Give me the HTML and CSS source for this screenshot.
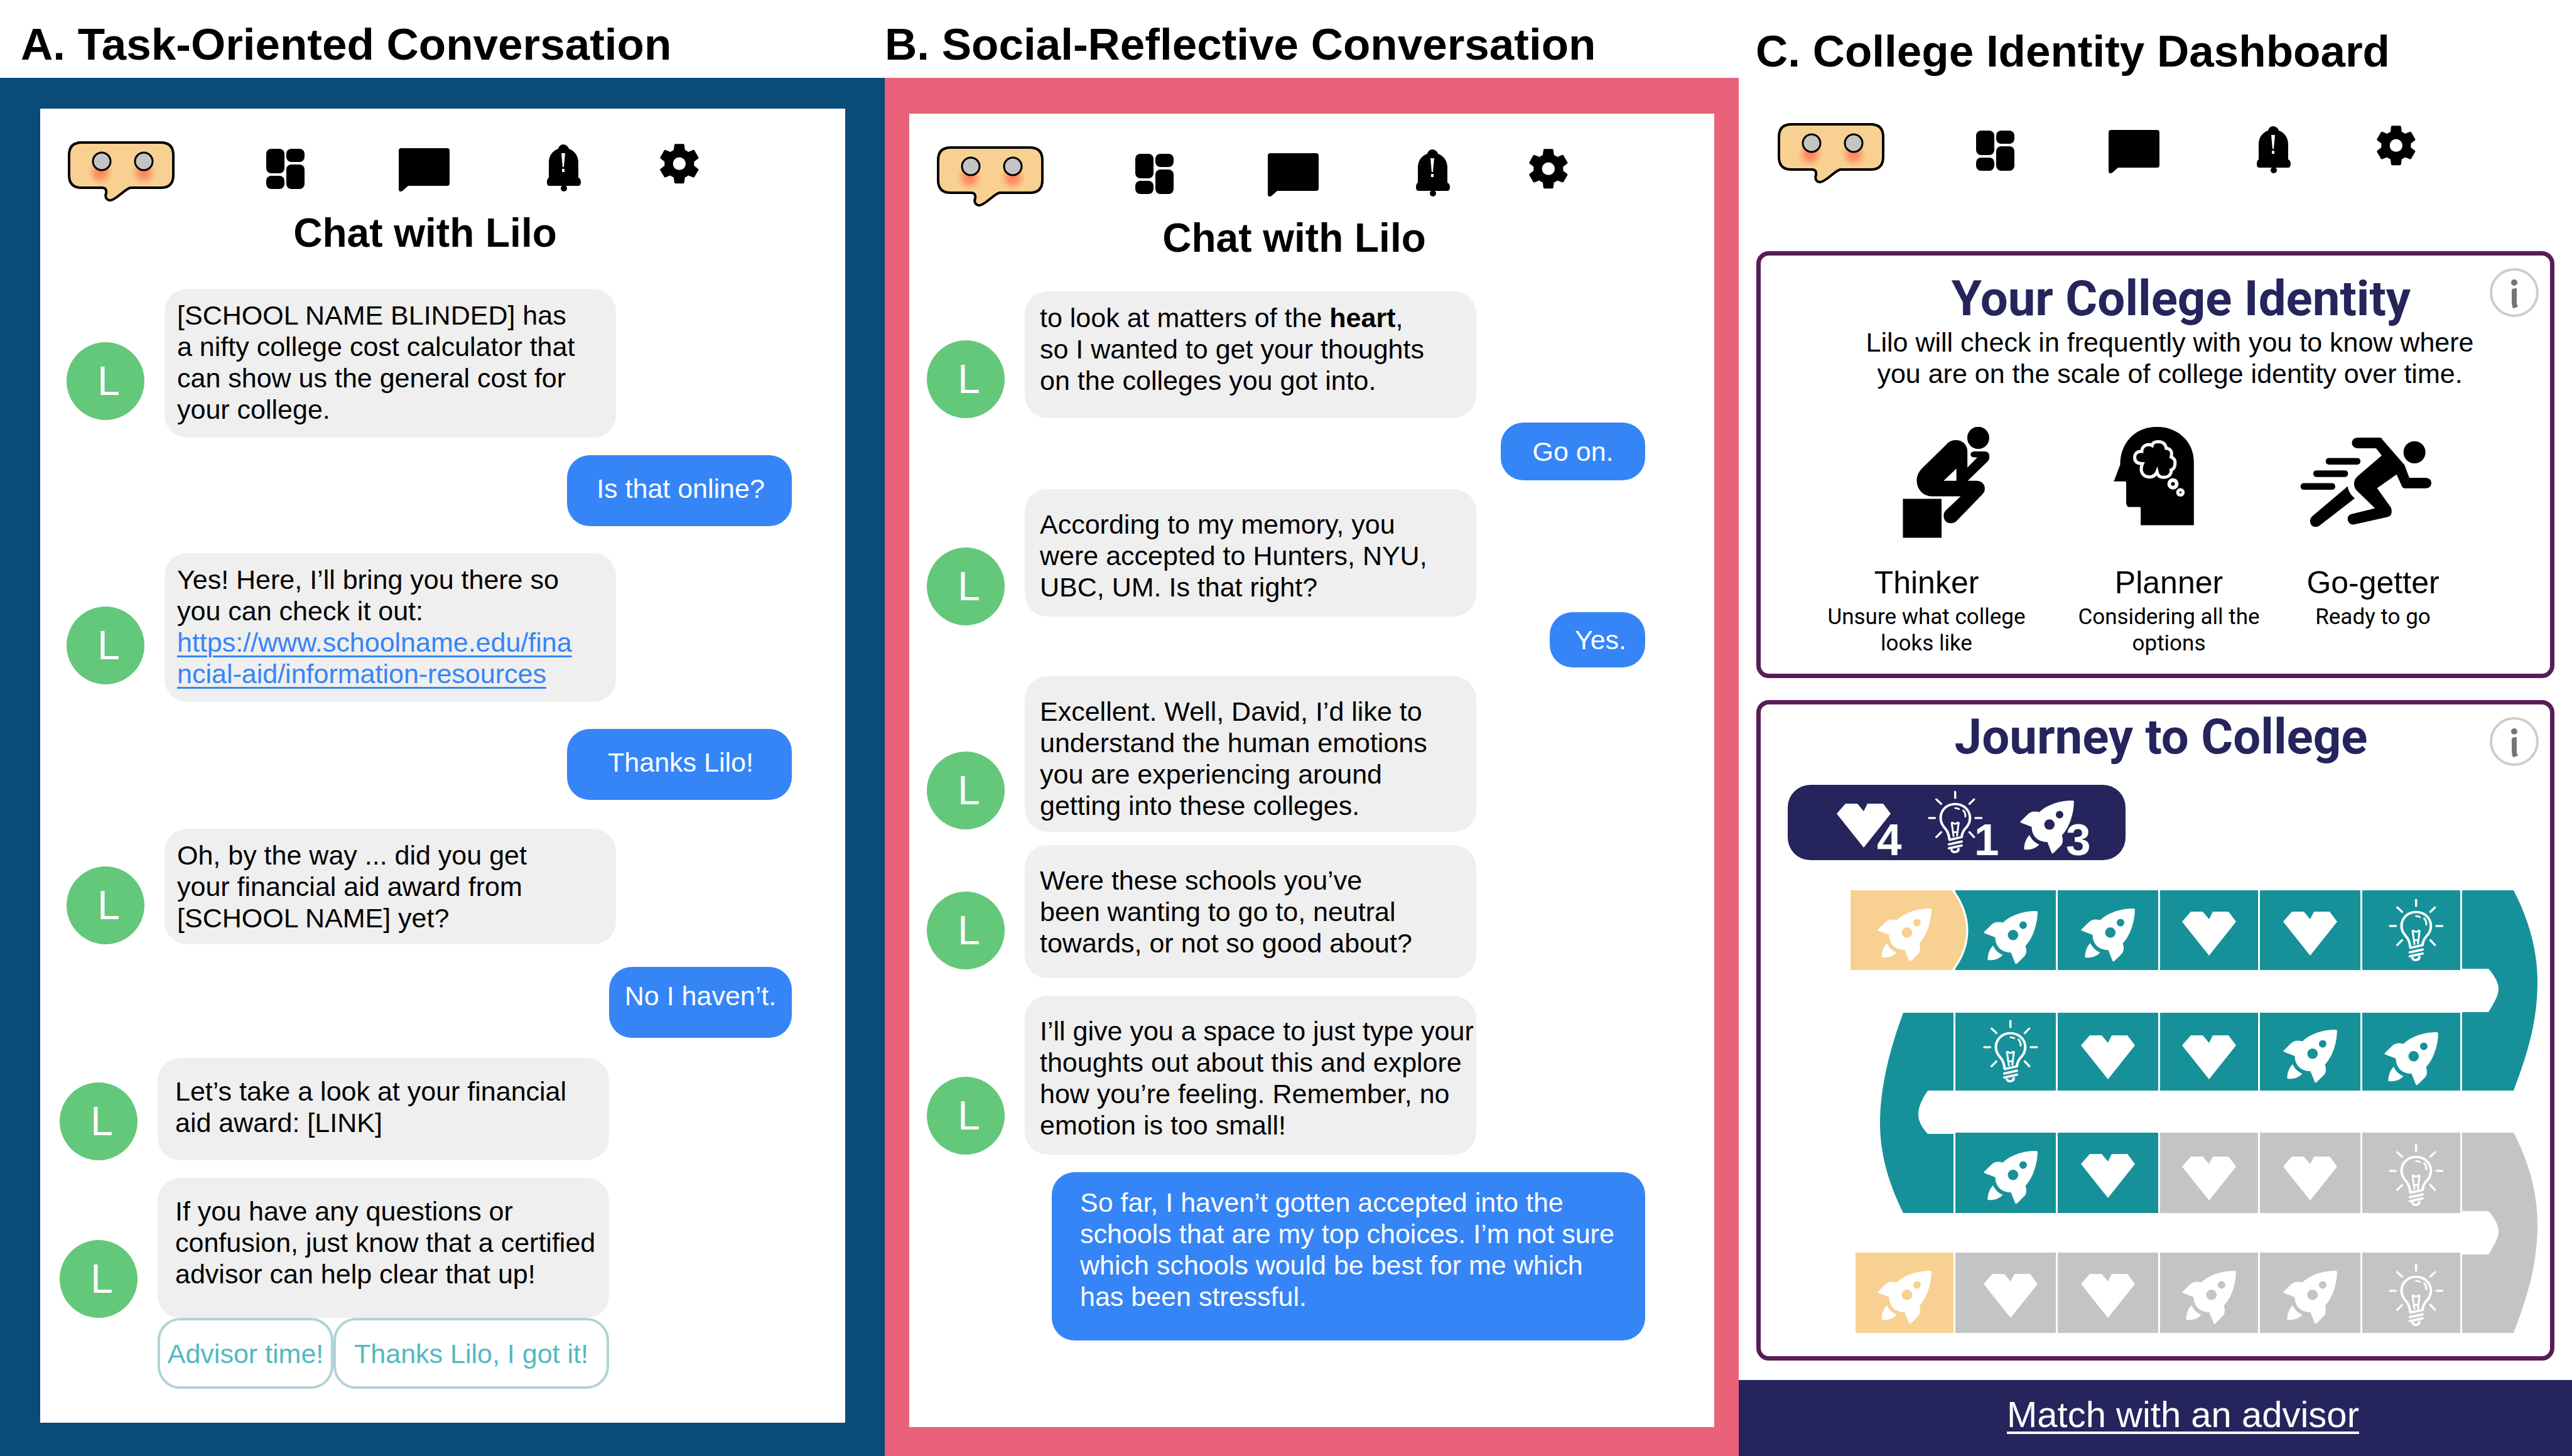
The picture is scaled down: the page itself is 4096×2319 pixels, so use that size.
FILE: index.html
```html
<!DOCTYPE html>
<html lang="en">
<head>
<meta charset="utf-8">
<title>Lilo college advisor</title>
<link rel="stylesheet" href="styles.css">
</head>
<body>
<svg class="sprite" aria-hidden="true">
  <defs>
    <radialGradient id="blush">
      <stop offset="0" stop-color="#ff8157"/>
      <stop offset="0.4" stop-color="#ff8b60" stop-opacity="0.85"/>
      <stop offset="1" stop-color="#f8a878" stop-opacity="0"/>
    </radialGradient>
  </defs>
  <symbol id="lilo" viewBox="0 0 170 96">
    <path d="M22 2H148Q168 2 168 22V54Q168 74 148 74H100C92 75 76 94 68 94C61 94 59 88 61 83C62 77 60 74 54 74H22Q2 74 2 54V22Q2 2 22 2Z" fill="#f8d092" stroke="#000" stroke-width="4"/>
    <circle cx="52" cy="50" r="21" fill="url(#blush)"/>
    <circle cx="121" cy="50" r="21" fill="url(#blush)"/>
    <circle cx="54" cy="32" r="14" fill="#c4c4c4" stroke="#000" stroke-width="3"/>
    <circle cx="121" cy="32" r="14" fill="#c4c4c4" stroke="#000" stroke-width="3"/>
  </symbol>
  <symbol id="tiles" viewBox="0 0 61 96">
    <rect x="0" y="12" width="29" height="39" rx="8"/>
    <rect x="32" y="12" width="29" height="21" rx="8"/>
    <rect x="32" y="37" width="29" height="39" rx="8"/>
    <rect x="0" y="55" width="29" height="21" rx="8"/>
  </symbol>
  <symbol id="chat" viewBox="0 0 81 96">
    <path d="M4 11H77Q81 11 81 15V67Q81 71 77 71H15L6 79Q0 82 0 76V15Q0 11 4 11Z"/>
  </symbol>
  <symbol id="bell" viewBox="0 0 54 96">
    <path d="M26 5C30 5 34 8 35 12C44 15 50 23 50 34V58C53 59 54 62 54 65C54 69 52 71 50 71H4C1 71 0 68 0 65C0 62 1 59 3 58V34C3 23 9 15 18 12C19 8 22 5 26 5Z"/>
    <circle cx="27" cy="75" r="5"/>
    <path d="M23 19H29L27 41H25ZM24 44H28V49H24Z" fill="#fff"/>
  </symbol>
  <symbol id="gear" viewBox="2.6 1.1 18.9 29.3">
    <path d="M19.14 12.94c.04-.3.06-.61.06-.94 0-.32-.02-.64-.07-.94l2.03-1.58c.18-.14.23-.41.12-.61l-1.92-3.32c-.12-.22-.37-.29-.59-.22l-2.39.96c-.5-.38-1.03-.7-1.62-.94l-.36-2.54c-.04-.24-.24-.41-.48-.41h-3.84c-.24 0-.43.17-.47.41l-.36 2.54c-.59.24-1.13.57-1.62.94l-2.39-.96c-.22-.08-.47 0-.59.22L2.74 8.87c-.12.21-.08.47.12.61l2.03 1.58c-.05.3-.09.63-.09.94s.02.64.07.94l-2.03 1.58c-.18.14-.23.41-.12.61l1.92 3.32c.12.22.37.29.59.22l2.39-.96c.5.38 1.03.7 1.62.94l.36 2.54c.05.24.24.41.48.41h3.84c.24 0 .44-.17.47-.41l.36-2.54c.59-.24 1.13-.56 1.62-.94l2.39.96c.22.08.47 0 .59-.22l1.92-3.32c.12-.22.07-.47-.12-.61l-2.01-1.58zM12 15.1a3.1 3.1 0 1 1 0-6.2 3.1 3.1 0 0 1 0 6.2z"/>
  </symbol>
  <symbol id="info" viewBox="0 0 78 78">
    <circle cx="39" cy="39" r="37" fill="none" stroke="#cdcdcd" stroke-width="4"/>
    <circle cx="39" cy="23" r="5" fill="#757575"/>
    <path d="M35 35Q35 32 43 32Q43 34 43 57L45 61Q41 64 37 64Q35 60 35 50Z" fill="#757575"/>
  </symbol>
  <symbol id="heart" viewBox="0 0 100 120">
    <path d="M21 30H40L50 42L56 30H81L93 46L50 100L7 46Z" fill="#fff"/>
  </symbol>
  <symbol id="rocket" viewBox="0 0 100 120">
    <g transform="translate(7.5 25) scale(.429 .3951)" fill="#fff" fill-rule="evenodd">
      <path d="M193 0C197 0 199 2 199 6C198 50 185 105 154 141C160 160 158 175 148 185L124 211C120 215 117 214 116 211L100 167C65 167 42 142 42 106L3 90C-1 88 -1 86 2 83L27 56C37 44 52 41 70 47C100 15 150 0 193 0ZM88.500 97a19.500 21 0 1 0 39 0a19.500 21 0 1 0 -39 0ZM131.500 57a14 15.500 0 1 0 28 0a14 15.500 0 1 0 -28 0Z"/>
      <path d="M34 139C42 158 52 168 70 177C58 192 40 199 18 198C14 198 13 196 14 192C15 170 22 152 34 139Z"/>
    </g>
  </symbol>
  <symbol id="bulb" viewBox="0 0 100 120">
    <g transform="translate(5.500 9) scale(.429 .3951)" fill="none" stroke="#fff" stroke-width="9.500" stroke-linecap="round" stroke-linejoin="round">
      <path d="M103 5V30M6 111H28M178 111H201M33 36L51 54M173 36L156 54M51 168L33 188M156 168L173 188" stroke-width="8"/>
      <path d="M82 199C80 178 76 165 65 152C54 139 49 127 49 111C49 79 72 55 103 55C134 55 158 79 158 111C158 125 154 137 145 148C132 162 128 172 127 188Z"/>
      <path d="M80 217L127 206M80 233L127 222M90 241C95 252 115 250 115 236"/>
      <path d="M97 184L90 130C95 127 98 136 103 134C108 136 111 127 116 130L110 182M97 168H110M103 71Q111 71 117 75M133 80Q142 92 141 105" stroke-width="7"/>
    </g>
  </symbol>
  <symbol id="turn-right" viewBox="0 0 121 319">
    <path d="M0 0H82C106 46 120 95 120 146C120 206 106 256 82 319H0V194H42C50 180 58 169 58 157C58 146 50 134 42 125H0Z"/>
  </symbol>
</svg>

<main class="board-of-panels">
  <section class="panel">
    <h1 class="panel-title indent">A. Task-Oriented Conversation</h1>
    <div class="frame frame-blue">
      <div class="screen">
        <nav class="toolbar" aria-label="Main">
          <button type="button" aria-label="Lilo"><svg width="170" height="96"><use href="#lilo"/></svg></button>
          <button type="button" aria-label="Dashboard"><svg width="61" height="96"><use href="#tiles"/></svg></button>
          <button type="button" aria-label="Chat"><svg width="81" height="96"><use href="#chat"/></svg></button>
          <button type="button" aria-label="Alerts"><svg width="54" height="96"><use href="#bell"/></svg></button>
          <button type="button" aria-label="Settings"><svg width="62" height="96"><use href="#gear"/></svg></button>
        </nav>
        <h2 class="chat-title">Chat with Lilo</h2>
        <ol class="thread thread-task">
          <li class="row"><span class="avatar up-28">L</span><p class="bubble snug">[SCHOOL NAME BLINDED] has<br>a nifty college cost calculator that<br>can show us the general cost for<br>your college.</p></li>
          <li class="row mine gap-28"><p class="bubble reply wide">Is that online?</p></li>
          <li class="row gap-43"><span class="avatar up-28">L</span><p class="bubble snug">Yes! Here, I’ll bring you there so<br>you can check it out:<br><a href="#resources">https://www.schoolname.edu/fina<br>ncial-aid/information-resources</a></p></li>
          <li class="row mine gap-43"><p class="bubble reply wide">Thanks Lilo!</p></li>
          <li class="row gap-46"><span class="avatar">L</span><p class="bubble snug even">Oh, by the way ... did you get<br>your financial aid award from<br>[SCHOOL NAME] yet?</p></li>
          <li class="row mine gap-36"><p class="bubble reply high">No I haven’t.</p></li>
          <li class="row outdent gap-32"><span class="avatar">L</span><p class="bubble roomy">Let’s take a look at your financial<br>aid award: [LINK]</p></li>
          <li class="row outdent gap-28"><span class="avatar">L</span><p class="bubble roomy tall">If you have any questions or<br>confusion, just know that a certified<br>advisor can help clear that up!</p></li>
        </ol>
        <div class="choices">
          <button type="button" class="choice">Advisor time!</button>
          <button type="button" class="choice choice-long">Thanks Lilo, I got it!</button>
        </div>
      </div>
    </div>
  </section>

  <section class="panel">
    <h1 class="panel-title">B. Social-Reflective Conversation</h1>
    <div class="frame frame-pink">
      <div class="screen">
        <nav class="toolbar" aria-label="Main">
          <button type="button" aria-label="Lilo"><svg width="170" height="96"><use href="#lilo"/></svg></button>
          <button type="button" aria-label="Dashboard"><svg width="61" height="96"><use href="#tiles"/></svg></button>
          <button type="button" aria-label="Chat"><svg width="81" height="96"><use href="#chat"/></svg></button>
          <button type="button" aria-label="Alerts"><svg width="54" height="96"><use href="#bell"/></svg></button>
          <button type="button" aria-label="Settings"><svg width="62" height="96"><use href="#gear"/></svg></button>
        </nav>
        <h2 class="chat-title">Chat with Lilo</h2>
        <ol class="thread thread-social">
          <li class="row"><span class="avatar">L</span><p class="bubble first">to look at matters of the <b>heart</b>,<br>so I wanted to get your thoughts<br>on the colleges you got into.</p></li>
          <li class="row mine gap-7"><p class="bubble reply go">Go on.</p></li>
          <li class="row gap-14"><span class="avatar down-14">L</span><p class="bubble">According to my memory, you<br>were accepted to Hunters, NYU,<br>UBC, UM. Is that right?</p></li>
          <li class="row mine overlap"><p class="bubble reply yes">Yes.</p></li>
          <li class="row gap-14"><span class="avatar up-4">L</span><p class="bubble close">Excellent. Well, David, I’d like to<br>understand the human emotions<br>you are experiencing around<br>getting into these colleges.</p></li>
          <li class="row gap-21"><span class="avatar up-14">L</span><p class="bubble balanced">Were these schools you’ve<br>been wanting to go to, neutral<br>towards, or not so good about?</p></li>
          <li class="row gap-28"><span class="avatar">L</span><p class="bubble">I’ll give you a space to just type your<br>thoughts out about this and explore<br>how you’re feeling. Remember, no<br>emotion is too small!</p></li>
          <li class="row mine gap-28"><p class="bubble reply essay">So far, I haven’t gotten accepted into the<br>schools that are my top choices. I’m not sure<br>which schools would be best for me which<br>has been stressful.</p></li>
        </ol>
      </div>
    </div>
  </section>

  <section class="panel dashboard">
    <h1 class="panel-title">C. College Identity Dashboard</h1>
    <nav class="toolbar" aria-label="Main">
      <button type="button" aria-label="Lilo"><svg width="170" height="96"><use href="#lilo"/></svg></button>
      <button type="button" aria-label="Dashboard"><svg width="61" height="96"><use href="#tiles"/></svg></button>
      <button type="button" aria-label="Chat"><svg width="81" height="96"><use href="#chat"/></svg></button>
      <button type="button" aria-label="Alerts"><svg width="54" height="96"><use href="#bell"/></svg></button>
      <button type="button" aria-label="Settings"><svg width="62" height="96"><use href="#gear"/></svg></button>
    </nav>

    <article class="card identity">
      <h2 class="card-title">Your College Identity</h2>
      <button type="button" class="info" aria-label="About your college identity"><svg width="78" height="78"><use href="#info"/></svg></button>
      <p class="lead">Lilo will check in frequently with you to know where<br>you are on the scale of college identity over time.</p>
      <ul class="types">
        <li>
          <svg width="240" height="177" viewBox="0 0 240 177" aria-hidden="true">
            <g transform="translate(61 -17) scale(.5644 .295)">
              <ellipse cx="250.500" cy="116.500" rx="31" ry="60"/>
              <path d="M38 446H147V656H38Z"/>
              <path fill-rule="evenodd" d="M187 129C207 129 220 155 220 190V277L248 222H240C233 222 229 215 229 206C229 197 234 190 240 190H268C277 190 282 200 282 215C282 232 280 238 276 246L221 348H245C260 348 269 365 269 390C269 405 267 412 262 422L189 566C184 576 178 577 172 577C160 577 153 560 153 535C153 525 155 518 158 510L201 432H118C95 430 77 395 77 345C77 325 81 305 90 285L162 150C168 137 176 129 187 129ZM189 282V348H153Z"/>
            </g>
          </svg>
          <h3>Thinker</h3>
          <p>Unsure what college<br>looks like</p>
        </li>
        <li>
          <svg width="240" height="177" viewBox="0 0 240 177" aria-hidden="true">
            <g transform="translate(-325 -17) scale(.5644 .295)">
              <path d="M755 57C815 57 859 140 859 245V588H709V497C709 492 708 490 705 490H676C670 488 668 475 668 465V358C668 354 667 352 664 352H633L651 262C651 140 695 57 755 57Z"/>
              <g fill="none" stroke="#fff">
                <path stroke-width="5" vector-effect="non-scaling-stroke" d="M712 190C697 188 692 205 692 222C692 245 700 256 714 256C706 290 712 327 733 328C745 328 752 315 755 300C757 318 762 330 772 330C790 330 796 310 795 290C805 285 806 268 806 250C806 235 802 226 795 220C798 195 796 176 781 173C779 148 770 137 759 137C748 137 742 145 741 158C728 145 712 160 712 190Z"/>
                <ellipse stroke-width="6" vector-effect="non-scaling-stroke" cx="800" cy="365" rx="10.500" ry="20.500"/>
                <ellipse stroke-width="5" vector-effect="non-scaling-stroke" cx="821" cy="411" rx="7.500" ry="14.500"/>
              </g>
            </g>
          </svg>
          <h3>Planner</h3>
          <p>Considering all the<br>options</p>
        </li>
        <li>
          <svg width="240" height="177" viewBox="0 0 240 177" aria-hidden="true">
            <g transform="translate(-650 -17) scale(.5644 .295)">
              <ellipse cx="1481.500" cy="194.500" rx="31" ry="60"/>
              <rect x="1231" y="225" width="98" height="36" rx="9" ry="17"/>
              <rect x="1196" y="292" width="98" height="36" rx="9" ry="17"/>
              <rect x="1160" y="361" width="98" height="36" rx="9" ry="17"/>
              <path d="M1322 115H1383C1388 115 1390 120 1392 128L1453 262L1467 332H1510C1522 332 1529 342 1529 360C1529 380 1522 389 1510 389H1456C1448 389 1446 380 1443 365L1431 314L1376 388L1414 490C1417 500 1418 515 1416 528C1414 537 1410 541 1405 544L1312 584C1300 588 1293 570 1293 555C1293 540 1297 531 1304 528L1370 497L1322 408C1312 390 1311 375 1311 360C1312 345 1315 335 1320 325L1389 212L1373 173H1322C1312 173 1305 160 1305 145C1305 127 1311 115 1322 115Z"/>
              <path d="M1293 378C1295 405 1302 425 1313 443L1215 588C1210 597 1206 597 1201 597C1192 597 1187 580 1187 565C1187 555 1189 548 1193 540Z"/>
            </g>
          </svg>
          <h3>Go-getter</h3>
          <p>Ready to go</p>
        </li>
      </ul>
    </article>

    <article class="card journey">
      <h2 class="card-title">Journey to College</h2>
      <button type="button" class="info" aria-label="About your journey"><svg width="78" height="78"><use href="#info"/></svg></button>
      <ul class="tally">
        <li><svg width="100" height="120"><use href="#heart"/></svg><b class="tight">4</b></li>
        <li><svg width="100" height="120"><use href="#bulb"/></svg><b>1</b></li>
        <li><svg width="100" height="120"><use href="#rocket"/></svg><b>3</b></li>
      </ul>
      <div class="path">
        <div class="cell start r1">
          <svg class="start-shape" width="190" height="127" viewBox="0 0 190 127" aria-hidden="true">
            <path d="M0 0H165C195 40 195 88 165 127H0Z" fill="#fff"/>
            <path d="M0 0H161C192 40 192 88 161 127H0Z" fill="#f8d092"/>
          </svg>
          <svg class="start-icon" width="100" height="120"><use href="#rocket"/></svg>
        </div>
        <div class="cell done r1 side low"><svg width="100" height="120"><use href="#rocket"/></svg></div>
        <div class="cell done r1"><svg width="100" height="120"><use href="#rocket"/></svg></div>
        <div class="cell done r1"><svg width="100" height="120"><use href="#heart"/></svg></div>
        <div class="cell done r1"><svg width="100" height="120"><use href="#heart"/></svg></div>
        <div class="cell done r1 side"><svg width="100" height="120"><use href="#bulb"/></svg></div>
        <svg class="turn turn-a" width="121" height="319" fill="#179199"><use href="#turn-right"/></svg>

        <svg class="turn turn-b" width="117" height="319" viewBox="0 0 117 319" fill="#179199"><path d="M37 0H117V124H76C66 139 61 150 61 162C61 174 68 184 76 193H117V319H37C13 270 0 224 0 176C0 116 17 54 37 0Z"/></svg>
        <div class="cell done r2 side"><svg width="100" height="120"><use href="#bulb"/></svg></div>
        <div class="cell done r2 low"><svg width="100" height="120"><use href="#heart"/></svg></div>
        <div class="cell done r2 low"><svg width="100" height="120"><use href="#heart"/></svg></div>
        <div class="cell done r2"><svg width="100" height="120"><use href="#rocket"/></svg></div>
        <div class="cell done r2 low"><svg width="100" height="120"><use href="#rocket"/></svg></div>

        <div class="cell done r3 c2 side"><svg width="100" height="120"><use href="#rocket"/></svg></div>
        <div class="cell done r3"><svg width="100" height="120"><use href="#heart"/></svg></div>
        <div class="cell r3 low"><svg width="100" height="120"><use href="#heart"/></svg></div>
        <div class="cell r3 low"><svg width="100" height="120"><use href="#heart"/></svg></div>
        <div class="cell r3 side low"><svg width="100" height="120"><use href="#bulb"/></svg></div>
        <svg class="turn turn-c" width="121" height="319" fill="#c4c4c4"><use href="#turn-right"/></svg>

        <div class="cell finish r4"><svg width="100" height="120"><use href="#rocket"/></svg></div>
        <div class="cell r4 side"><svg width="100" height="120"><use href="#heart"/></svg></div>
        <div class="cell r4"><svg width="100" height="120"><use href="#heart"/></svg></div>
        <div class="cell r4"><svg width="100" height="120"><use href="#rocket"/></svg></div>
        <div class="cell r4"><svg width="100" height="120"><use href="#rocket"/></svg></div>
        <div class="cell r4 side low"><svg width="100" height="120"><use href="#bulb"/></svg></div>
      </div>
    </article>

    <footer class="match"><a href="#advisor">Match with an advisor</a></footer>
  </section>
</main>
</body>
</html>
```
FILE: styles.css
```css
* { box-sizing: border-box; }

body {
  margin: 0;
  background: #fff;
  color: #000;
  font-family: "Liberation Sans", Arial, sans-serif;
  font-size: 43px;
  line-height: 50px;
}

h1, h2, h3, p, ol, ul { margin: 0; padding: 0; }
ol, ul { list-style: none; }
svg { display: block; flex: none; }
button {
  padding: 0;
  border: 0;
  background: none;
  color: inherit;
  font: inherit;
}

.sprite { position: absolute; width: 0; height: 0; }

.board-of-panels {
  display: grid;
  grid-template-columns: 1409fr 1360fr 1327fr;
  min-height: 100vh;
}

.panel {
  display: flex;
  flex-direction: column;
  min-width: 0;
}

.panel-title {
  padding: 31px 0 13px;
  font-size: 71px;
  line-height: 80px;
  white-space: nowrap;
}
.panel-title.indent { padding-left: 33px; }

/* Phone frames */
.frame { flex: 1; display: flex; }
.frame-blue { background: #0b4b78; padding: 49px 63px 53px 64px; }
.frame-pink { background: #e96279; padding: 57px 39px 46px; }
.screen { flex: 1; background: #fff; padding-top: 52px; }

.toolbar {
  display: grid;
  grid-template-columns: 316px 211px 236px 180px 62px;
  justify-items: start;
  margin-left: 44px;
}

.chat-title {
  margin-top: 13px;
  padding-right: 56px;
  font-size: 64px;
  line-height: 74px;
  text-align: center;
}

/* Messages */
.thread-task { margin: 52px 85px 0 42px; }
.thread-social { margin: 48px 110px 0 28px; }

.row { display: flex; align-items: flex-end; gap: 32px; }
.row.mine { justify-content: flex-end; }
.row.outdent { margin-left: -11px; }
.gap-7 { margin-top: 7px; }
.gap-14 { margin-top: 14px; }
.gap-21 { margin-top: 21px; }
.gap-28 { margin-top: 28px; }
.gap-32 { margin-top: 32px; }
.gap-36 { margin-top: 36px; }
.gap-43 { margin-top: 43px; }
.gap-46 { margin-top: 46px; }
.overlap { margin-top: -7px; }

.avatar {
  flex: none;
  width: 124px;
  height: 124px;
  padding-left: 10px;
  border-radius: 50%;
  background: #64c87a;
  color: #fff;
  font-size: 64px;
  line-height: 124px;
  text-align: center;
}
.up-4 { margin-bottom: 4px; }
.up-14 { margin-bottom: 14px; }
.up-28 { margin-bottom: 28px; }
.down-14 { margin-bottom: -14px; }

.bubble {
  width: 719px;
  padding: 31px 0 22px 24px;
  border-radius: 36px;
  background: #efefef;
  white-space: nowrap;
}
.bubble a { color: #3585f7; text-decoration-thickness: 3px; text-underline-offset: 6px; }
.bubble.snug { padding: 17px 0 20px 20px; }
.bubble.snug.even { padding-bottom: 17px; }
.bubble.roomy { padding: 28px 0 35px 28px; }
.bubble.roomy.tall { padding-bottom: 45px; }
.bubble.first { padding: 17px 0 35px 24px; }
.bubble.close { padding-bottom: 17px; }
.bubble.balanced { padding-bottom: 31px; }

.bubble.reply {
  background: #3585f7;
  color: #fff;
  text-align: center;
}
.reply.wide { width: 358px; padding: 28px 0 35px 4px; }
.reply.high { width: 291px; padding: 21px 0 42px; }
.reply.go { width: 230px; padding: 21px 0; }
.reply.yes { width: 152px; padding: 19px 0 19px 10px; }
.bubble.essay { width: 945px; padding: 23px 0 45px 45px; text-align: left; }

.choices { display: flex; margin-left: 187px; }
.choice {
  width: 280px;
  height: 113px;
  border: 4px solid #b0d3d6;
  border-radius: 36px;
  color: #52b9c0;
  white-space: nowrap;
}
.choice-long { width: 439px; }

/* Dashboard */
.dashboard .panel-title { padding: 42px 0 0 27px; }
.dashboard .toolbar {
  grid-template-columns: 316px 211px 236px 191px 62px;
  margin: 74px 0 0 62px;
}

.card {
  position: relative;
  margin: 35px 28px 0;
  border: 7px solid #581c57;
  border-radius: 20px;
}
.card.identity { margin-top: 108px; padding: 25px 0 27px; }
.card.journey { padding: 8px 0 37px; }

.card-title {
  color: #25245c;
  font-family: Roboto, sans-serif;
  font-size: 78px;
  line-height: 88px;
  text-align: center;
}
.identity .card-title { padding-left: 82px; }
.journey .card-title { padding-left: 18px; }

.info { position: absolute; top: 20px; right: 18px; }

.lead { padding-left: 46px; text-align: center; }

.types {
  display: grid;
  grid-template-columns: 376fr 396fr 254fr;
  margin-top: 60px;
  padding: 0 155px 0 76px;
}
.types li {
  display: flex;
  flex-direction: column;
  align-items: center;
  text-align: center;
  white-space: nowrap;
}
.types h3 {
  margin: 41px 0 4px;
  font-size: 50px;
  font-weight: 400;
  line-height: 60px;
}
.types p {
  font-family: Roboto, sans-serif;
  font-size: 35px;
  line-height: 42px;
}

.tally {
  display: grid;
  grid-template-columns: repeat(3, 146px);
  width: 538px;
  margin: 32px 0 0 43px;
  padding-left: 71px;
  border-radius: 36px;
  background: #25245c;
  color: #fff;
}
.tally li { display: flex; align-items: flex-end; }
.tally b { margin-left: -20px; font-size: 71px; line-height: 64px; }
.tally .tight { margin-left: -29px; }

.path {
  display: grid;
  grid-template-columns: 164px 160px 160px 156px 160px 156px 121px;
  grid-template-rows: 127px 68px 124px 67px 128px 63px 128px;
  column-gap: 3px;
  justify-content: end;
  margin: 48px 19px 0 0;
}
.cell {
  display: flex;
  align-items: center;
  justify-content: center;
  background: #c4c4c4;
}
.r1 { grid-row: 1; }
.r2 { grid-row: 3; }
.r3 { grid-row: 5; }
.r4 { grid-row: 7; }
.c2 { grid-column: 2; }
.cell.done { background: #179199; }
.cell.side { padding-left: 16px; }
.cell.low { padding-top: 8px; }
.cell.finish { margin-left: 8px; background: #f8d092; }
.cell.start { position: relative; z-index: 1; background: none; padding-left: 8px; }
.start-shape { position: absolute; top: 0; left: 0; }
.start-icon { position: relative; }

.turn-a { grid-area: 1 / 7 / 4 / 8; }
.turn-b { grid-area: 3 / 1 / 6 / 2; justify-self: end; }
.turn-c { grid-area: 5 / 7 / 8 / 8; }

.match {
  margin-top: auto;
  padding: 25px 0 36px 88px;
  background: #25245c;
  color: #fff;
  font-size: 58px;
  line-height: 60px;
  text-align: center;
}
.match a { color: inherit; text-decoration-thickness: 4px; text-underline-offset: 7px; }
```
